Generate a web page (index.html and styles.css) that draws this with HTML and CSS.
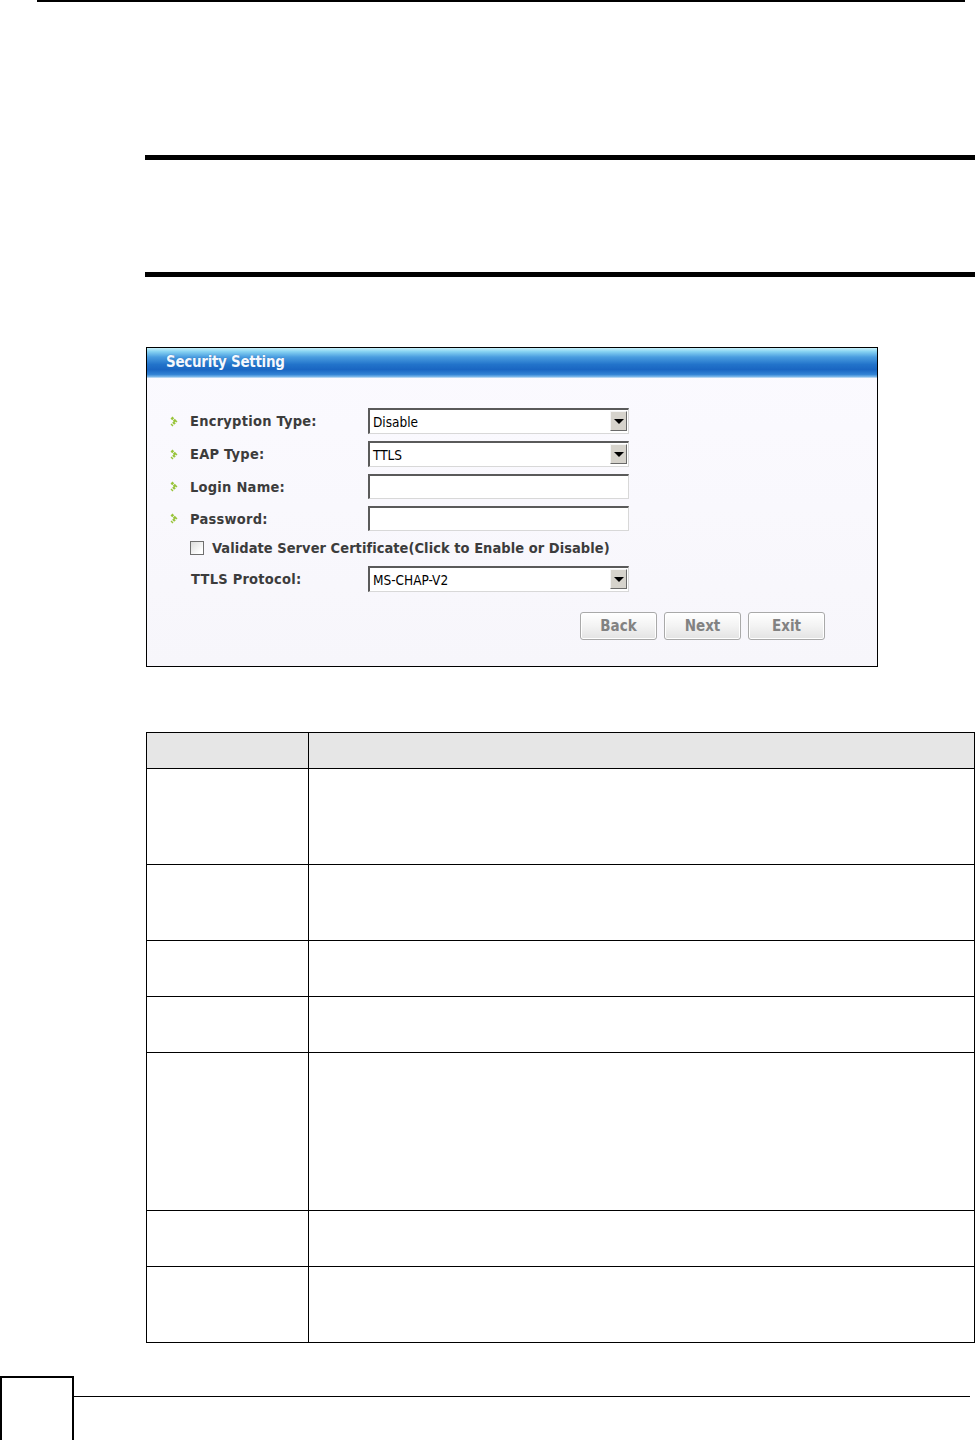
FILE: index.html
```html
<!DOCTYPE html>
<html lang="en">
<head>
	<meta charset="UTF-8">
	<title>Security Setting</title>
	<link rel="stylesheet" href="styles.css">
</head>
<body>

	<div class="page-top"></div>
	<div class="chapter"></div>

	<div class="dialog">
		<div class="dialog-title">Security Setting</div>
		<form class="dialog-body" action="" method="get">
			<div class="row">
				<label class="field"><svg class="arrow" width="8" height="11" viewBox="0 0 8 11"><polyline points="1.5,1.5 5.5,5.5 1.5,9.5" fill="none" stroke="#98c43a" stroke-width="2.8" stroke-dasharray="2.4 0.9"/></svg>Encryption Type:</label>
				<div class="select">Disable<span class="drop"></span></div>
			</div>
			<div class="row">
				<label class="field"><svg class="arrow" width="8" height="11" viewBox="0 0 8 11"><polyline points="1.5,1.5 5.5,5.5 1.5,9.5" fill="none" stroke="#98c43a" stroke-width="2.8" stroke-dasharray="2.4 0.9"/></svg>EAP Type:</label>
				<div class="select">TTLS<span class="drop"></span></div>
			</div>
			<div class="row short">
				<label class="field"><svg class="arrow" width="8" height="11" viewBox="0 0 8 11"><polyline points="1.5,1.5 5.5,5.5 1.5,9.5" fill="none" stroke="#98c43a" stroke-width="2.8" stroke-dasharray="2.4 0.9"/></svg>Login Name:</label>
				<div class="select text"></div>
			</div>
			<div class="row short">
				<label class="field"><svg class="arrow" width="8" height="11" viewBox="0 0 8 11"><polyline points="1.5,1.5 5.5,5.5 1.5,9.5" fill="none" stroke="#98c43a" stroke-width="2.8" stroke-dasharray="2.4 0.9"/></svg>Password:</label>
				<div class="select text"></div>
			</div>
			<div class="row check">
				<span class="box"></span>Validate Server Certificate(Click to Enable or Disable)
			</div>
			<div class="row">
				<label class="field plain">TTLS Protocol:</label>
				<div class="select">MS-CHAP-V2<span class="drop"></span></div>
			</div>
			<div class="buttons">
				<button type="button">Back</button>
				<button type="button">Next</button>
				<button type="button">Exit</button>
			</div>
		</form>
	</div>

	<table class="desc">
		<tr class="head"><th class="first"></th><th></th></tr>
		<tr class="h96"><td></td><td></td></tr>
		<tr class="h76"><td></td><td></td></tr>
		<tr class="h56"><td></td><td></td></tr>
		<tr class="h56"><td></td><td></td></tr>
		<tr class="h158"><td></td><td></td></tr>
		<tr class="h56"><td></td><td></td></tr>
		<tr class="h76"><td></td><td></td></tr>
	</table>

	<div class="footer">
		<div class="page-num"></div>
		<div class="footer-line"></div>
	</div>

</body>
</html>
```

FILE: styles.css
```css
* {
	box-sizing: border-box;
}
html,
body {
	margin: 0;
	padding: 0;
	background-color: #fff;
	overflow: hidden;
}
body {
	font-family: "DejaVu Sans", sans-serif;
	width: 975px;
	height: 1440px;
}
.page-top {
	margin-left: 37px;
	width: 928px;
	border-top: 2px solid #000;
}
.chapter {
	margin: 153px 0 0 145px;
	height: 122px;
	border-top: 5px solid #000;
	border-bottom: 5px solid #000;
}
.dialog {
	margin: 70px 0 0 146px;
	width: 732px;
	height: 320px;
	border: 1px solid #000;
	background: linear-gradient(180deg, #fbfaff 0%, #f7f6fb 100%);
}
.dialog-title {
	height: 30px;
	padding: 5px 0 0 19px;
	font-family: "DejaVu Sans Condensed", "DejaVu Sans", sans-serif;
	font-size: 15px;
	font-weight: bold;
	letter-spacing: -0.3px;
	color: #f4f8ff;
	text-shadow: 0 0 1px #1b5fa8;
	background: linear-gradient(180deg, #c6f0fb 0%, #86d2f2 12%, #4a9de0 30%, #2273ca 55%, #1a66c2 72%, #3282d4 88%, #7cb8ea 96%, #dfeaf6 100%);
}
.dialog-body {
	margin: 0;
	padding: 30px 0 0 23px;
}
.row {
	display: flex;
	align-items: center;
	height: 26px;
	margin-bottom: 7px;
}
.row.short {
	height: 25px;
}
.field {
	display: flex;
	align-items: center;
	width: 198px;
	font-family: "DejaVu Sans Condensed", "DejaVu Sans", sans-serif;
	font-size: 14.5px;
	font-weight: bold;
	letter-spacing: 0.25px;
	color: #3c3c3c;
}
.arrow {
	margin-right: 12px;
}
.field.plain {
	padding-left: 21px;
}
.select {
	position: relative;
	width: 261px;
	height: 100%;
	padding: 4px 0 0 3px;
	font-family: "DejaVu Sans Condensed", "DejaVu Sans", sans-serif;
	font-size: 13.5px;
	color: #000;
	background-color: #fff;
	border-top: 2px solid #5a5a5a;
	border-left: 2px solid #5a5a5a;
	border-right: 1px solid #d8d8d8;
	border-bottom: 1px solid #d8d8d8;
}
.drop {
	position: absolute;
	top: 1px;
	right: 1px;
	width: 17px;
	height: 20px;
	background-color: #d6d3cc;
	border-top: 1px solid #f4f4f4;
	border-left: 1px solid #f4f4f4;
	border-right: 1px solid #6a6a6a;
	border-bottom: 1px solid #6a6a6a;
}
.drop:after {
	content: "";
	position: absolute;
	top: 7px;
	left: 3px;
	border-left: 5px solid transparent;
	border-right: 5px solid transparent;
	border-top: 5px solid #000;
}
.row.check {
	height: 20px;
	margin: 3px 0 8px 20px;
	font-family: "DejaVu Sans Condensed", "DejaVu Sans", sans-serif;
	font-size: 14.5px;
	font-weight: bold;
	letter-spacing: 0.05px;
	color: #3c3c3c;
}
.box {
	width: 14px;
	height: 14px;
	margin-right: 8px;
	border: 1px solid #6f6f6f;
	background: linear-gradient(135deg, #dcdcdc 0%, #fff 80%);
}
.buttons {
	display: flex;
	justify-content: flex-end;
	gap: 7px;
	margin-top: 20px;
	padding-right: 52px;
}
.buttons button {
	width: 77px;
	height: 28px;
	padding: 0;
	font-family: "DejaVu Sans Condensed", "DejaVu Sans", sans-serif;
	font-size: 15px;
	font-weight: bold;
	color: #828282;
	border: 1px solid #a9a9a9;
	border-radius: 3px;
	box-shadow: inset 0 0 0 1px #fff;
	background: linear-gradient(180deg, #ffffff 0%, #f3f3f3 50%, #e3e3e3 100%);
	outline: none;
	cursor: pointer;
}
.desc {
	margin: 65px 0 0 146px;
	width: 829px;
	border-collapse: collapse;
	table-layout: fixed;
}
.desc th,
.desc td {
	padding: 0;
	border: 1px solid #000;
}
.desc .first {
	width: 162px;
}
.desc .head {
	height: 36px;
	background-color: #e6e6e6;
}
.h96 {
	height: 96px;
}
.h76 {
	height: 76px;
}
.h56 {
	height: 56px;
}
.h158 {
	height: 158px;
}
.footer {
	display: flex;
	align-items: flex-start;
	margin-top: 33px;
}
.page-num {
	width: 74px;
	height: 66px;
	border: 2px solid #000;
}
.footer-line {
	width: 896px;
	margin-top: 20px;
	border-top: 1px solid #000;
}
```
